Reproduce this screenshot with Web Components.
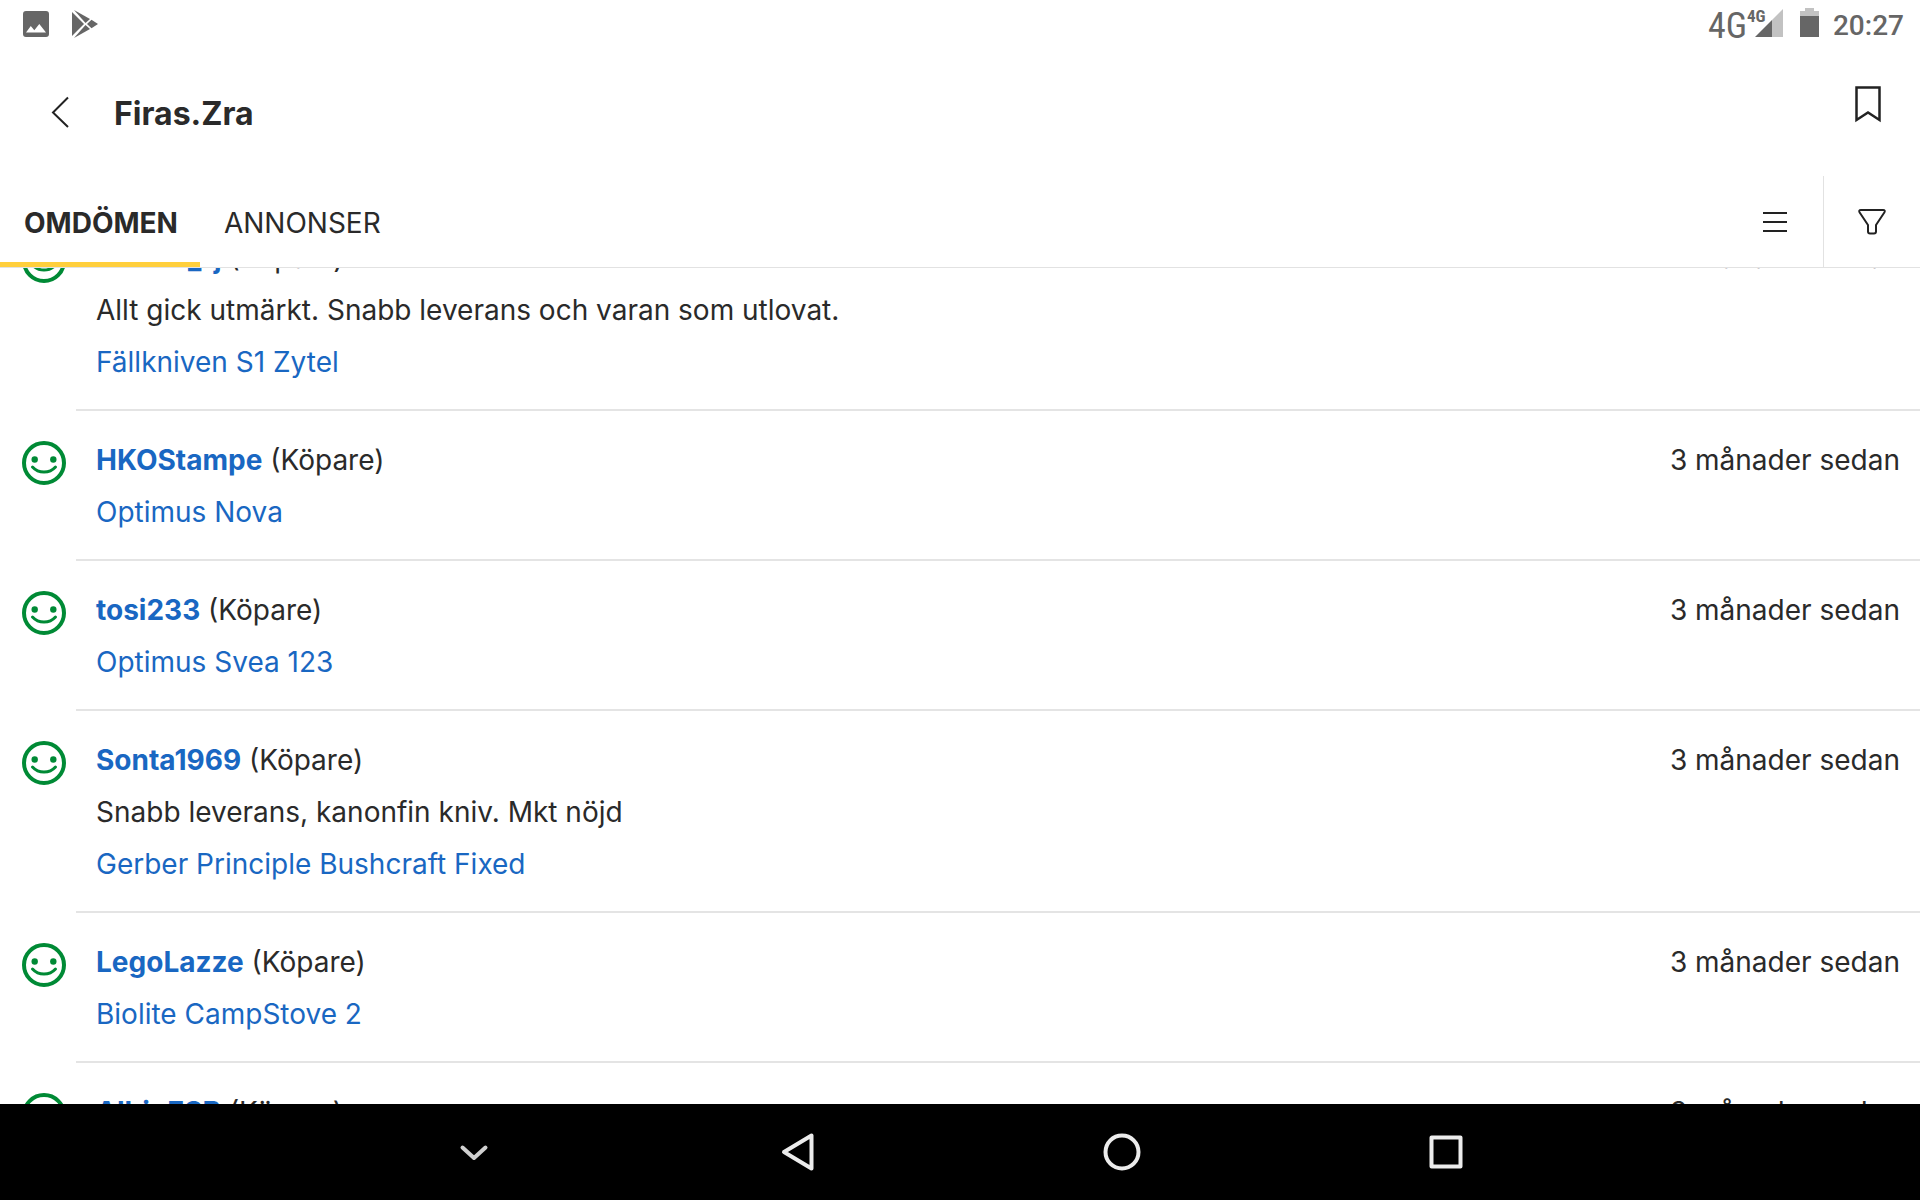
<!DOCTYPE html>
<html lang="sv">
<head>
<meta charset="utf-8">
<title>Firas.Zra</title>
<style>
html, body { margin: 0; height: 100%; }
body { font-family: Inter, "Liberation Sans", sans-serif; font-size: 28px; color: #2a2a2a; background: #fff; }
</style>
</head>
<body>
<profile-app></profile-app>
<script>
const define = (name, html, setup) => customElements.define(name, class extends HTMLElement {
  connectedCallback() {
    if (this.shadowRoot) return;
    const t = document.createElement('template');
    t.innerHTML = typeof html === 'function' ? html(this) : html;
    this.attachShadow({ mode: 'open' }).append(t.content.cloneNode(true));
    if (setup) setup(this);
  }
});

define('status-bar', `
<style>
:host { display: flex; align-items: center; justify-content: space-between; flex: none; height: 48px; padding: 0 16px 0 22px; color: #666; font-family: Roboto, sans-serif; }
div { display: flex; align-items: center; }
.left { gap: 20px; }
time { font-size: 28px; line-height: 44px; font-weight: 500; padding: 4px 0 0 14px; }
.net { font: 400 36px/44px "Liberation Sans Narrow", "Roboto Condensed", Roboto, sans-serif; padding: 4px 8px 0 0; }
.signal { position: relative; }
.type { position: absolute; left: -8px; top: 6px; font: 700 17px/20px "Liberation Sans Narrow", "Roboto Condensed", Roboto, sans-serif; }
svg { display: block; }
</style>
<div class="left">
<svg width="28" height="48" viewBox="0 0 28 48"><path fill="#666" fill-rule="evenodd" d="M4 11h20a3 3 0 0 1 3 3v20a3 3 0 0 1-3 3H4a3 3 0 0 1-3-3V14a3 3 0 0 1 3-3zM4 32.500h20L17.300 24l-5 6.300-3.500-4.200z"/></svg>
<svg width="28" height="48" viewBox="0 0 28 48"><g fill="#666"><path d="M2 12l12 12L2 36z"/><path d="M4 10l16 9-4.500 4z"/><path d="M4 38l16-9-4.500-4z"/><path d="M17 24l4.500-4.300L28 24l-6.500 4.300z"/></g></svg>
</div>
<div>
<span class="net">4G</span>
<div class="signal"><svg width="28" height="48" viewBox="0 0 28 48"><path fill="#666" d="M0 37L17 20v17z"/><path fill="#c2c2c2" d="M17 20L28 9v28H17z"/></svg><span class="type">4G</span></div>
<svg width="36" height="48" viewBox="0 0 36 48"><path fill="#c2c2c2" d="M17 16v-5h5V8h9v3h5v5z"/><path fill="#666" d="M17 16h19v21H17z"/></svg>
<time>20:27</time>
</div>`);

define('app-header', `
<style>
:host { display: flex; align-items: center; flex: none; height: 128px; }
button { border: 0; padding: 0; background: none; display: flex; }
h1 { flex: 1; margin: 0; padding-top: 4px; font-size: 32px; line-height: 48px; font-weight: 700; }
.back { padding: 0 36px 0 44px; }
.save { padding: 0 32px; align-self: flex-start; }
</style>
<button class="back" aria-label="Tillbaka"><svg width="34" height="48" viewBox="0 0 34 48" fill="none" stroke="#222" stroke-width="2"><path d="M24 9.500L9 24.500 24 39"/></svg></button>
<h1><slot></slot></h1>
<button class="save" aria-label="Spara"><svg width="40" height="80" viewBox="0 0 40 80" fill="none" stroke="#222" stroke-width="2.500"><path d="M8.500 39.500h23v32.500L20 64.500 8.500 72z"/></svg></button>`);

define('tab-bar', `
<style>
:host { display: flex; flex: none; height: 91px; border-bottom: 1px solid #e2e2e2; }
button { font: inherit; color: inherit; border: 0; background: none; padding: 0; }
[role=tab] { padding: 8px 22px 0 24px; border-bottom: 5px solid transparent; box-sizing: border-box; height: 91px; line-height: 78px; }
[aria-selected=true] { font-weight: 700; border-color: #ffcf3c; }
nav { flex: 1; display: flex; }
.tool { display: flex; align-items: center; justify-content: center; box-sizing: border-box; width: 97px; }
.tool + .tool { border-left: 1px solid #e2e2e2; }
</style>
<nav role="tablist"><button role="tab" aria-selected="true">OMDÖMEN</button><button role="tab" aria-selected="false">ANNONSER</button></nav>
<button class="tool" aria-label="Lista"><svg width="32" height="32" viewBox="0 0 32 32" stroke="#222" stroke-width="2"><path d="M4 7h24M4 16h24M4 25h24"/></svg></button>
<button class="tool" aria-label="Filter"><svg width="32" height="32" viewBox="0 0 32 32" fill="none" stroke="#222" stroke-width="2" stroke-linejoin="round"><path d="M5 4h22c2 0 2 1 1.500 2.200L20 19v6.500q0 2-2 2h-4q-2 0-2-2V19L3.500 6.200C3 5 3 4 5 4z"/></svg></button>`);

define('review-item', el => `
<style>
:host { display: flex; }
svg { flex: none; display: block; margin: 30px 10px 0 22px; }
.body { flex: 1; padding: 23px 20px 21px; border-bottom: 2px solid #e4e4e4; line-height: 52px; }
.head { display: flex; justify-content: space-between; }
.head a { font-weight: 700; }
p { margin: 0; }
a { color: #1967c2; text-decoration: none; }
</style>
<svg width="44" height="44" viewBox="0 0 44 44" fill="none" stroke="#008a35" stroke-width="4"><circle cx="22" cy="22" r="20"/><path d="M10.500 26c6 6.700 17 6.700 23 0" stroke-width="3" stroke-linecap="round"/><g fill="#008a35" stroke="none"><circle cx="12.700" cy="18.500" r="3.200"/><circle cx="31.300" cy="18.500" r="3.200"/></g></svg>
<div class="body">
<div class="head"><span><a href="#">${el.getAttribute('user')}</a> (Köpare)</span><time>3 månader sedan</time></div>
${el.textContent.trim() ? '<p><slot></slot></p>' : ''}
<a href="#">${el.getAttribute('item')}</a>
</div>`);

define('review-list', `
<style>:host { display: block; flex: 1; min-height: 0; overflow: hidden; }</style><slot></slot>`,
  el => requestAnimationFrame(() => { el.scrollTop = 59; }));

define('system-nav', `
<style>
:host { display: flex; justify-content: center; flex: none; height: 96px; background: #000; }
button { width: 324px; border: 0; background: none; padding: 0; display: flex; align-items: center; justify-content: center; }
svg { fill: none; stroke: #ececec; stroke-width: 4; stroke-linejoin: round; stroke-linecap: round; }
.hide { stroke: #d0d0d0; }
</style>
<button aria-label="Dölj"><svg class="hide" width="48" height="48" viewBox="0 0 48 48"><path d="M12.500 19.500L24 30l11.500-10.500"/></svg></button>
<button aria-label="Bakåt"><svg width="48" height="48" viewBox="0 0 48 48"><path d="M37.500 7.500v33L10 24z"/></svg></button>
<button aria-label="Hem"><svg width="48" height="48" viewBox="0 0 48 48"><circle cx="24" cy="24" r="16.500"/></svg></button>
<button aria-label="Översikt"><svg width="48" height="48" viewBox="0 0 48 48"><path d="M9.500 9.500h29v29h-29z"/></svg></button>`);

define('profile-app', `
<style>:host { display: flex; flex-direction: column; height: 100vh; }</style>
<status-bar></status-bar>
<app-header>Firas.Zra</app-header>
<tab-bar></tab-bar>
<review-list>
<review-item user="Hedrin_rj" item="Fällkniven S1 Zytel">Allt gick utmärkt. Snabb leverans och varan som utlovat.</review-item>
<review-item user="HKOStampe" item="Optimus Nova"></review-item>
<review-item user="tosi233" item="Optimus Svea 123"></review-item>
<review-item user="Sonta1969" item="Gerber Principle Bushcraft Fixed">Snabb leverans, kanonfin kniv. Mkt nöjd</review-item>
<review-item user="LegoLazze" item="Biolite CampStove 2"></review-item>
<review-item user="AlbinESB" item="Primus"></review-item>
</review-list>
<system-nav></system-nav>`);
</script>
</body>
</html>
